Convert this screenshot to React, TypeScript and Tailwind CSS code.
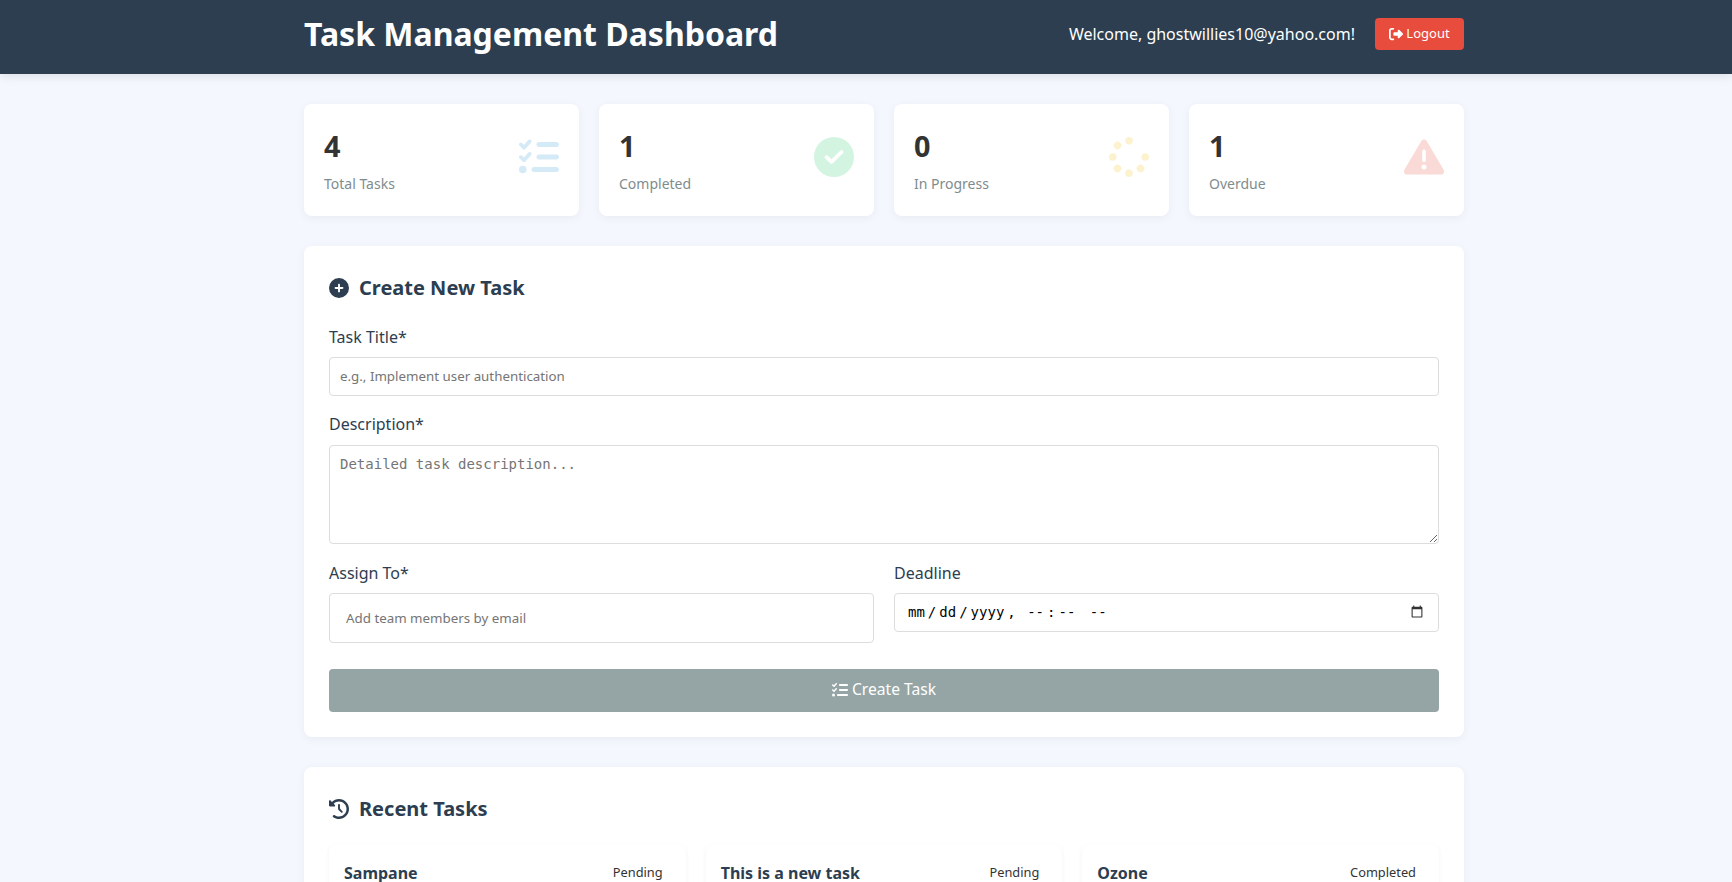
import React from "react";
import {
  FaCircleCheck,
  FaCirclePlus,
  FaClockRotateLeft,
  FaListCheck,
  FaRightFromBracket,
  FaSpinner,
  FaTriangleExclamation,
} from "react-icons/fa6";

const stats = [
  { value: 4, label: "Total Tasks", icon: <FaListCheck className="mb-1.5 text-[40px] text-[#3498db] opacity-20" /> },
  { value: 1, label: "Completed", icon: <FaCircleCheck className="mb-1.5 text-[40px] text-[#2ecc71] opacity-20" /> },
  { value: 0, label: "In Progress", icon: <FaSpinner className="mb-1.5 text-[40px] text-[#f1c40f] opacity-20" /> },
  { value: 1, label: "Overdue", icon: <FaTriangleExclamation className="mb-1.5 text-[40px] text-[#e74c3c] opacity-20" /> },
];

const tasks = [
  { title: "Sampane", status: "Pending" },
  { title: "This is a new task", status: "Pending" },
  { title: "Ozone", status: "Completed" },
];

const labelClass = "block text-base leading-[22px] text-[#2c3e50]";
const fieldClass = "block w-full rounded border border-[#dddddd] bg-white outline-none placeholder:text-[#757575]";

export default function App() {
  return (
    <div className="min-h-[882px] bg-[#f5f7ff] pb-10 font-['Noto_Sans',sans-serif] text-[#333333]">
      {/* Header */}
      <header className="h-[74px] bg-[#2c3e50] pb-1.5 pl-9 text-white shadow-[0_2px_10px_rgba(0,0,0,0.1)]">
        <div className="mx-auto flex h-full w-[1160px] items-center justify-between">
          <h1 className="text-[32px] font-bold leading-none">Task Management Dashboard</h1>
          <div className="flex items-center gap-5">
            <span className="text-base">Welcome, ghostwillies10@yahoo.com!</span>
            <button className="flex h-8 w-[89px] items-center justify-center gap-[3px] rounded bg-[#e74c3c] text-[13px] text-white">
              <FaRightFromBracket className="text-sm" />
              Logout
            </button>
          </div>
        </div>
      </header>

      <main className="pl-9 pt-[30px]">
        <div className="mx-auto w-[1160px]">
          {/* Stat cards */}
          <div className="grid grid-cols-4 gap-5">
            {stats.map((s) => (
              <div
                key={s.label}
                className="flex h-[112px] items-center justify-between rounded-lg bg-white px-5 shadow-[0_2px_10px_rgba(0,0,0,0.05)]"
              >
                <div>
                  <div className="text-[28.8px] font-bold leading-[40px]">{s.value}</div>
                  <div className="mt-2 text-sm text-[#7f8c8d]">{s.label}</div>
                </div>
                {s.icon}
              </div>
            ))}
          </div>

          {/* Create form */}
          <section className="mt-[30px] h-[491px] rounded-lg bg-white px-[25px] pt-[25px] shadow-[0_2px_10px_rgba(0,0,0,0.05)]">
            <h2 className="flex items-center gap-2.5 text-xl font-bold leading-[34px] text-[#2c3e50]">
              <FaCirclePlus />
              Create New Task
            </h2>
            <label className={`mt-[21px] ${labelClass}`}>Task Title*</label>
            <input
              className={`mt-[9px] h-[39px] px-2.5 pb-px text-[13.33px] ${fieldClass}`}
              placeholder="e.g., Implement user authentication"
            />
            <label className={`mt-[17px] ${labelClass}`}>Description*</label>
            <textarea
              className={`mt-2.5 h-[99px] px-2.5 py-2 font-['DejaVu_Sans_Mono',monospace] text-sm ${fieldClass}`}
              placeholder="Detailed task description..."
            />
            <div className="mt-[18px] grid grid-cols-2 gap-5">
              <div>
                <label className={labelClass}>Assign To*</label>
                <input
                  className={`mt-[9px] h-[50px] px-4 text-[13.33px] ${fieldClass}`}
                  placeholder="Add team members by email"
                />
              </div>
              <div>
                <label className={labelClass}>Deadline</label>
                <input
                  type="datetime-local"
                  className={`mt-[9px] h-[39px] px-3 pb-[2px] font-['DejaVu_Sans_Mono',monospace] text-sm text-black [&::-webkit-calendar-picker-indicator]:opacity-80 [&::-webkit-datetime-edit-text]:px-[2px] ${fieldClass}`}
                />
              </div>
            </div>
            <button className="mt-[26px] flex h-[43px] w-full items-center justify-center gap-1 rounded bg-[#95a5a6] pb-[2px] text-[15.6px] text-white">
              <FaListCheck className="text-base" />
              Create Task
            </button>
          </section>

          {/* Recent tasks */}
          <section className="mt-[30px] rounded-lg bg-white p-[25px] shadow-[0_2px_10px_rgba(0,0,0,0.05)]">
            <h2 className="flex items-center gap-2.5 text-xl font-bold leading-[34px] text-[#2c3e50]">
              <FaClockRotateLeft />
              Recent Tasks
            </h2>
            <div className="mt-[18px] grid grid-cols-3 gap-5">
              {tasks.map((t) => (
                <div
                  key={t.title}
                  className="h-[200px] rounded-lg bg-white px-[15px] pt-[17px] shadow-[0_2px_5px_rgba(0,0,0,0.05)]"
                >
                  <div className="flex items-center justify-between">
                    <h3 className="text-base font-bold text-[#2c3e50]">{t.title}</h3>
                    <span className="px-2 text-[12.8px] text-[#333333]">{t.status}</span>
                  </div>
                </div>
              ))}
            </div>
          </section>
        </div>
      </main>
    </div>
  );
}
